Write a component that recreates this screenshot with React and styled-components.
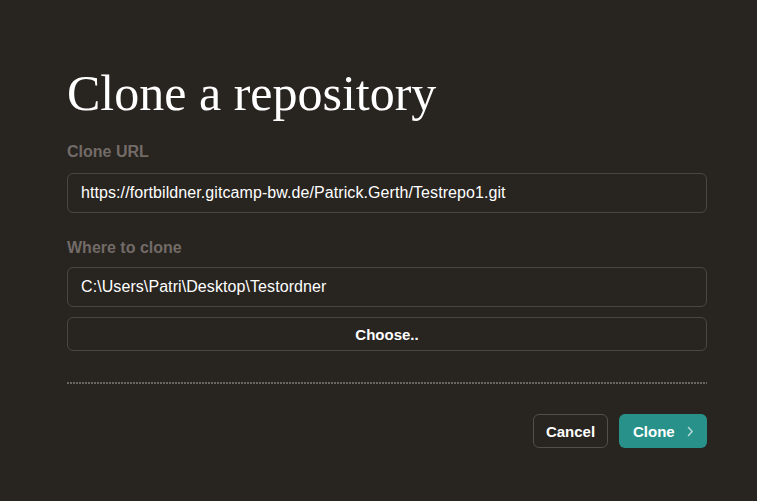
import React from 'react';
import { useState } from 'react';
import styled, { createGlobalStyle } from 'styled-components';

const GlobalStyle = createGlobalStyle`
  html, body {
    margin: 0;
    padding: 0;
    background-color: #282420;
  }
  body {
    font-family: "Liberation Sans", Arial, sans-serif;
  }
`;

function App() {
  const [url, setUrl] = useState(
    'https://fortbildner.gitcamp-bw.de/Patrick.Gerth/Testrepo1.git'
  );
  const [path, setPath] = useState('C:\\Users\\Patri\\Desktop\\Testordner');

  return (
    <>
      <GlobalStyle />
      <Page>
        <Title>Clone a repository</Title>

        <Label $gap={21}>Clone URL</Label>
        <Input $gap={11} value={url} onChange={(e) => setUrl(e.target.value)} />

        <Label $gap={25}>Where to clone</Label>
        <Input $gap={9} value={path} onChange={(e) => setPath(e.target.value)} />
        <ChooseBtn>Choose..</ChooseBtn>

        <Divider />

        <Footer>
          <CancelBtn>Cancel</CancelBtn>
          <CloneBtn>
            Clone
            <svg width="7" height="11" viewBox="0 0 7 11" fill="none">
              <path
                d="M1.5 1.5L5.2 5.5L1.5 9.5"
                stroke="rgba(255,255,255,0.65)"
                strokeWidth="1.5"
                strokeLinecap="round"
                strokeLinejoin="round"
              />
            </svg>
          </CloneBtn>
        </Footer>
      </Page>
    </>
  );
}

export default App;

const Page = styled.div`
  display: flex;
  flex-direction: column;
  padding: 65px 50px 0 67px;
`;

const Title = styled.h1`
  margin: 0;
  font-family: "Liberation Serif", "Times New Roman", serif;
  font-weight: normal;
  font-size: 50px;
  line-height: 56px;
  color: #ffffff;
`;

const Label = styled.label`
  margin-top: ${(p) => p.$gap}px;
  font-size: 16px;
  line-height: 20px;
  font-weight: bold;
  color: #726b67;
`;

const Input = styled.input`
  margin-top: ${(p) => p.$gap}px;
  box-sizing: border-box;
  height: 40px;
  width: 100%;
  padding: 0 13px;
  border: 1px solid #4a4643;
  border-radius: 6px;
  background: transparent;
  color: #ffffff;
  font-family: "Liberation Sans", Arial, sans-serif;
  font-size: 16px;
  letter-spacing: 0.08px;
  outline: none;
`;

const ChooseBtn = styled.button`
  margin-top: 10px;
  box-sizing: border-box;
  height: 34px;
  width: 100%;
  border: 1px solid #4a4643;
  border-radius: 6px;
  background: transparent;
  color: #ffffff;
  font-family: "Liberation Sans", Arial, sans-serif;
  font-size: 15px;
  font-weight: bold;
  cursor: pointer;
`;

const Divider = styled.div`
  margin-top: 31px;
  height: 2px;
  background-image: repeating-linear-gradient(
    to right,
    #6a6561 0,
    #6a6561 2px,
    transparent 2px,
    transparent 3px
  );
`;

const Footer = styled.div`
  margin-top: 30px;
  display: flex;
  justify-content: flex-end;
  gap: 11px;
`;

const CancelBtn = styled.button`
  box-sizing: border-box;
  height: 34px;
  width: 75px;
  border: 1px solid #524e4b;
  border-radius: 6px;
  background: transparent;
  color: #ffffff;
  font-family: "Liberation Sans", Arial, sans-serif;
  font-size: 15px;
  font-weight: bold;
  cursor: pointer;
`;

const CloneBtn = styled.button`
  box-sizing: border-box;
  display: flex;
  align-items: center;
  gap: 12px;
  height: 34px;
  width: 88px;
  padding: 0 0 0 14px;
  border: none;
  border-radius: 6px;
  background-color: #28928a;
  color: #ffffff;
  font-family: "Liberation Sans", Arial, sans-serif;
  font-size: 15px;
  font-weight: bold;
  cursor: pointer;
`;
